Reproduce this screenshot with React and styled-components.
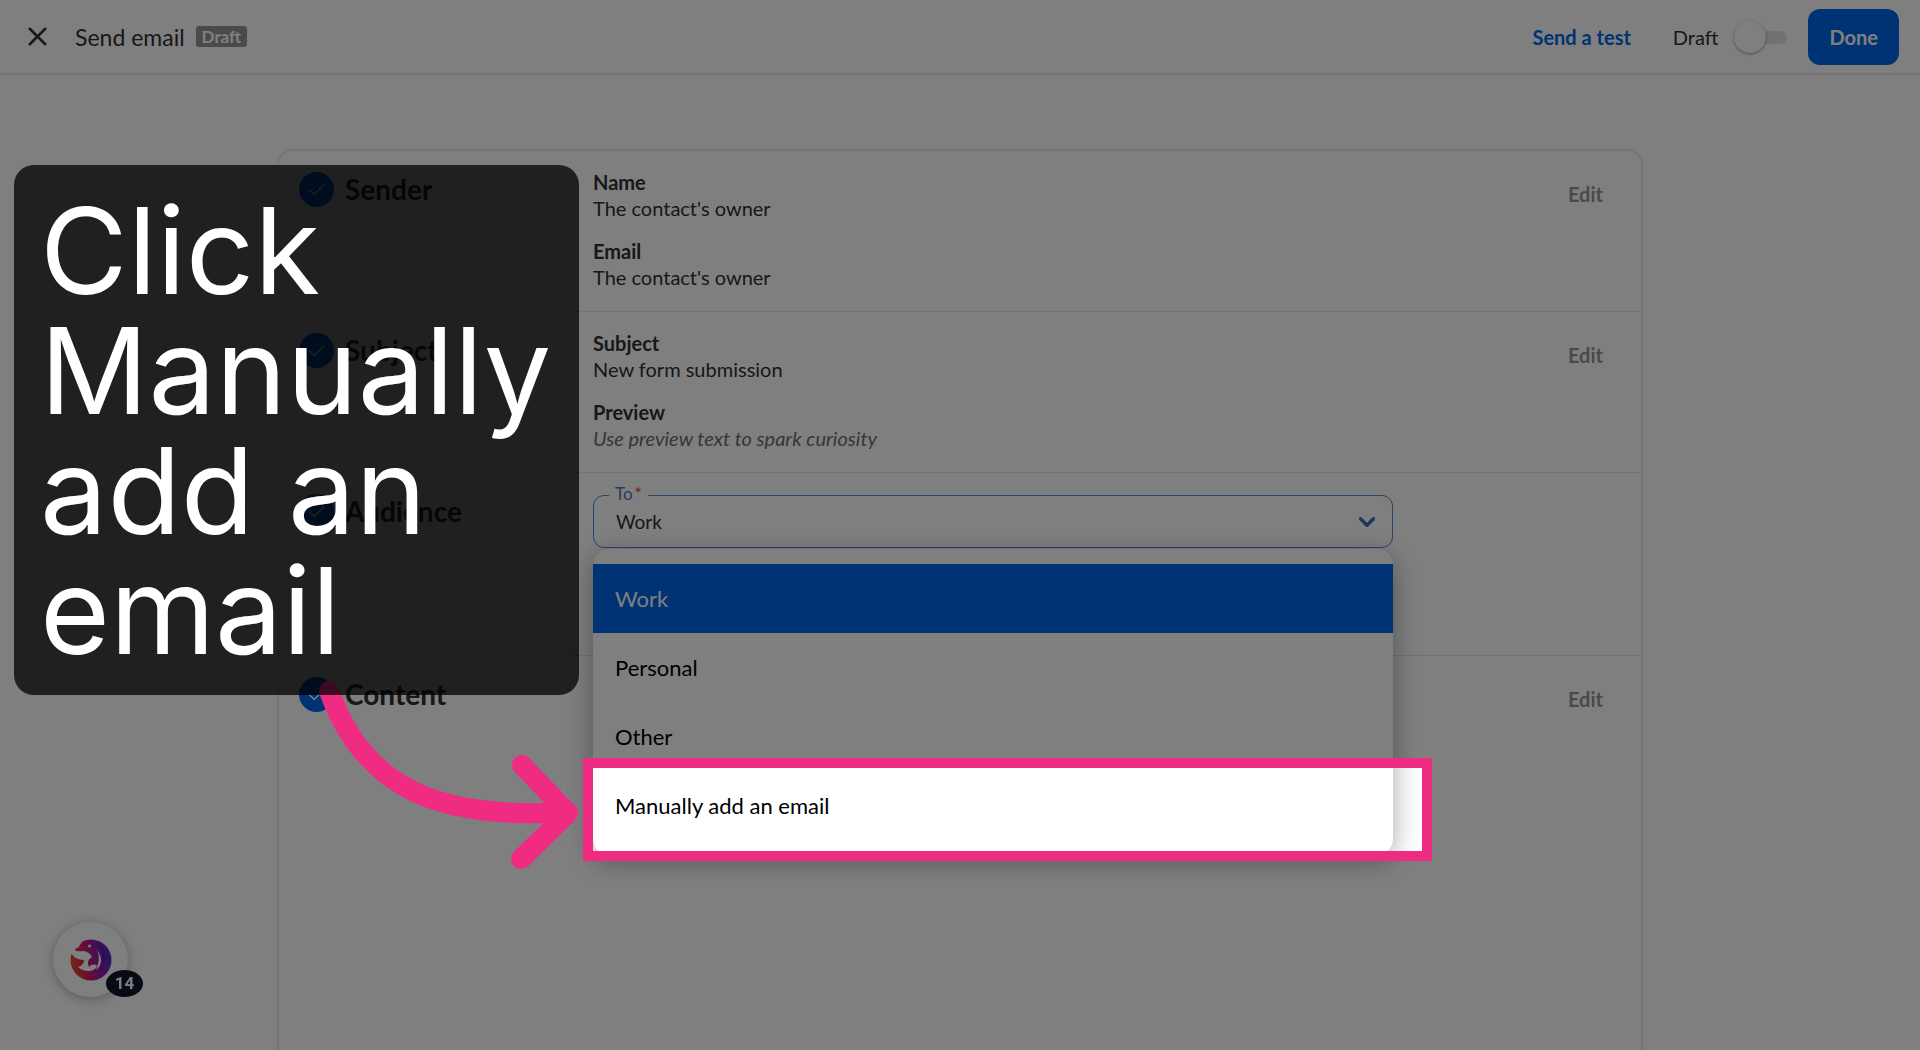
import { useState } from 'react'

import styled, { createGlobalStyle } from 'styled-components'
import { Check, ChevronDown, X } from 'lucide-react'

const GlobalStyle = createGlobalStyle`
  * {
    box-sizing: border-box;
  }

  body {
    margin: 0;
    background: #fff;
    color: #303030;
    font-family: Lato, "Liberation Sans", sans-serif;
    font-size: 20px;
    line-height: 26px;
  }

  button, select {
    font: inherit;
    color: inherit;
    border: 0;
    margin: 0;
    padding: 0;
    background: none;
  }
`

const Page = styled.div`
  position: relative;
  display: flex;
  flex-direction: column;
  min-height: 100vh;
  overflow: hidden;
`

const Header = styled.header`
  display: flex;
  align-items: center;
  justify-content: space-between;
  height: 75px;
  padding: 0 21px 0 22px;
  border-bottom: 2px solid #ebebeb;
`

const HeaderGroup = styled.div`
  display: flex;
  align-items: center;
`

const CloseButton = styled.button`
  display: flex;
  margin-right: 22px;
`

const Title = styled.h1`
  margin: 0 11px 0 0;
  font-size: 23px;
  font-weight: 400;
`

const Badge = styled.span`
  padding: 0 6px;
  border-radius: 3px;
  background: #949494;
  color: #fff;
  font-size: 17px;
  font-weight: 700;
  line-height: 21px;
`

const TestLink = styled.a`
  margin-right: 42px;
  color: #0067e9;
  font-weight: 700;
  text-decoration: none;
`

const SwitchLabel = styled.label`
  display: flex;
  align-items: center;
  gap: 16px;
  margin-right: 21px;
`

const Switch = styled.input`
  appearance: none;
  position: relative;
  width: 53px;
  height: 32px;
  margin: 0;

  &::before {
    content: '';
    position: absolute;
    top: 10px;
    left: 10px;
    right: 0;
    height: 13px;
    border-radius: 7px;
    background: #e4e4e4;
  }

  &::after {
    content: '';
    position: absolute;
    top: 0;
    left: 0;
    width: 32px;
    height: 32px;
    border-radius: 50%;
    background: #fff;
    box-shadow: 0 1px 3px rgba(0, 0, 0, 0.4);
  }
`

const DoneButton = styled.button`
  height: 56px;
  padding: 0 21px;
  border-radius: 12px;
  background: #0067e9;
  color: #fff;
  font-weight: 700;
`

const Card = styled.main`
  flex: 1;
  width: calc(100% - 48px);
  max-width: 1366px;
  margin: 74px auto 0;
  border: 2px solid #ebebeb;
  border-bottom: 0;
  border-radius: 16px 16px 0 0;
`

const Section = styled.section`
  display: grid;
  grid-template-columns: 294px minmax(0, 800px) 1fr;
  align-items: start;
  min-height: ${({ $tall }) => ($tall ? '183px' : '161px')};
  padding: 18px 38px 18px 20px;
  border-bottom: ${({ $last }) => ($last ? '0' : '1px solid #e4e4e4')};
`

const SectionTitle = styled.h2`
  display: flex;
  align-items: center;
  gap: 11px;
  margin: 3px 0 0;
  font-size: 28px;
  font-weight: 700;
  line-height: 35px;
`

const Tick = styled.span`
  display: flex;
  align-items: center;
  justify-content: center;
  width: 35px;
  height: 35px;
  border-radius: 50%;
  background: #0067e9;
  color: #fff;
`

const Fields = styled.dl`
  display: grid;
  gap: 17px;
  margin: 0;
`

const FieldName = styled.dt`
  font-weight: 700;
`

const FieldValue = styled.dd`
  margin: 0;
  color: ${({ $hint }) => ($hint ? '#6e6e6e' : 'inherit')};
  font-style: ${({ $hint }) => ($hint ? 'italic' : 'normal')};
`

const EditButton = styled.button`
  justify-self: end;
  margin-top: 12px;
  color: #949494;
  font-weight: 700;
`

const SelectWrap = styled.div`
  position: relative;
  margin-top: 4px;
`

const SelectLabel = styled.label`
  position: absolute;
  top: -14px;
  left: 16px;
  display: flex;
  gap: 2px;
  padding: 0 6px;
  background: #fff;
  color: #4f76b8;
  font-size: 17px;
`

const Required = styled.span`
  color: #e0301e;
`

const Select = styled.select`
  appearance: none;
  display: block;
  width: 100%;
  height: 53px;
  padding: 0 22px;
  border: 1px solid #4f8ad8;
  border-radius: 11px;
  font-size: 19px;
`

const SelectIcon = styled.span`
  position: absolute;
  top: 14px;
  right: 13px;
  display: flex;
  color: #3c69b4;
  pointer-events: none;
`

const Menu = styled.div`
  position: absolute;
  top: 54px;
  left: 0;
  right: 0;
  z-index: 10;
  padding: 15px 0;
  border-radius: 16px;
  background: #fff;
  box-shadow: 0 6px 28px rgba(0, 0, 0, 0.35);
`

const Option = styled.button`
  display: block;
  width: 100%;
  height: 69px;
  padding: 0 22px;
  background: ${({ $active }) => ($active ? '#0067e9' : 'transparent')};
  color: ${({ $active }) => ($active ? '#fff' : '#000')};
  font-size: 22px;
  text-align: left;
`

// The frame's outer shadow dims everything around it.
const Spotlight = styled.div`
  position: absolute;
  top: 263px;
  left: -10px;
  right: -39px;
  z-index: 20;
  height: 103px;
  border: 10px solid #f02c82;
  box-shadow: 0 0 0 3000px rgba(0, 0, 0, 0.5);
  pointer-events: none;
`

const Arrow = styled.svg`
  position: absolute;
  top: 670px;
  left: 310px;
  z-index: 21;
  pointer-events: none;
`

const Callout = styled.aside`
  position: absolute;
  top: 165px;
  left: 14px;
  z-index: 22;
  width: 565px;
  padding: 26px 26px 24px;
  border-radius: 20px;
  background: rgba(0, 0, 0, 0.75);
  color: #fff;
  font-family: Inter, "Liberation Sans", sans-serif;
  font-size: 120px;
  line-height: 120px;
`

const Launcher = styled.button`
  position: fixed;
  left: 53px;
  bottom: 53px;
  z-index: 5;
  display: flex;
  align-items: center;
  justify-content: center;
  width: 75px;
  height: 75px;
  border-radius: 50%;
  background: #fff;
  box-shadow: 0 2px 12px rgba(0, 0, 0, 0.3);
`

const Count = styled.span`
  position: absolute;
  right: -15px;
  bottom: 0;
  width: 37px;
  border-radius: 50%;
  background: #0c1628;
  color: #fff;
  font-family: Roboto, "Liberation Sans", sans-serif;
  font-size: 17px;
  font-weight: 700;
  line-height: 27px;
`

const sections = [
  {
    title: 'Sender',
    fields: [
      { name: 'Name', value: "The contact's owner" },
      { name: 'Email', value: "The contact's owner" },
    ],
  },
  {
    title: 'Subject',
    fields: [
      { name: 'Subject', value: 'New form submission' },
      { name: 'Preview', value: 'Use preview text to spark curiosity', hint: true },
    ],
  },
]

const emailTypes = ['Work', 'Personal', 'Other', 'Manually add an email']

function Heading({ children }) {
  return (
    <SectionTitle>
      <Tick><Check size={22} strokeWidth={1.5} /></Tick>
      {children}
    </SectionTitle>
  )
}

function DolphinLogo() {
  return (
    <svg width="42" height="42" viewBox="0 0 42 42" aria-hidden="true">
      <defs>
        <linearGradient id="body" x1="0" y1="0.6" x2="1" y2="0.4">
          <stop offset="0" stopColor="#e8501e" />
          <stop offset="0.4" stopColor="#cc1a6c" />
          <stop offset="0.65" stopColor="#941ea8" />
          <stop offset="1" stopColor="#4a28c8" />
        </linearGradient>
      </defs>
      <circle cx="21" cy="21" r="20.5" fill="url(#body)" />
      <path d="M29 4 C37 11 38 25 30 33 C34 22 34 13 25 5 Z" fill="#5c1690" opacity="0.6" />
      <path d="M-1 -1 H20 C14 0 10 4 9 8 C6 9 5 10 5 11 C6 13 11 12 14 12 C18 13 21 15 22 18 C18 20 17 24 19 28 C22 25 25 25 27 27 C25 33 14 34 8 28 C12 27 14 24 14 21 C8 21 3 18 0 13 L-1 14 Z" fill="#fff" />
      <path d="M27 11 C33 18 32 27 26 31 C29 24 30 17 27 11 Z" fill="#fff" />
      <circle cx="19.5" cy="7" r="1.5" fill="#fff" />
    </svg>
  )
}

function App() {
  const [type, setType] = useState('Work')

  return (
    <Page>
      <GlobalStyle />
      <Header>
        <HeaderGroup>
          <CloseButton aria-label="Close"><X size={31} strokeWidth={2} /></CloseButton>
          <Title>Send email</Title>
          <Badge>Draft</Badge>
        </HeaderGroup>
        <HeaderGroup>
          <TestLink href="#test">Send a test</TestLink>
          <SwitchLabel>
            Draft
            <Switch type="checkbox" role="switch" />
          </SwitchLabel>
          <DoneButton>Done</DoneButton>
        </HeaderGroup>
      </Header>

      <Card>
        {sections.map((section) => (
          <Section key={section.title}>
            <Heading>{section.title}</Heading>
            <Fields>
              {section.fields.map((field) => (
                <div key={field.name}>
                  <FieldName>{field.name}</FieldName>
                  <FieldValue $hint={field.hint}>{field.value}</FieldValue>
                </div>
              ))}
            </Fields>
            <EditButton>Edit</EditButton>
          </Section>
        ))}

        <Section $tall>
          <Heading>Audience</Heading>
          <SelectWrap>
            <Select id="to" value={type} onChange={(event) => setType(event.target.value)}>
              {emailTypes.map((item) => <option key={item}>{item}</option>)}
            </Select>
            <SelectLabel htmlFor="to">To<Required>*</Required></SelectLabel>
            <SelectIcon><ChevronDown size={26} strokeWidth={3} /></SelectIcon>
            <Menu role="listbox" aria-label="To">
              {emailTypes.map((item) => (
                <Option
                  key={item}
                  role="option"
                  aria-selected={item === type}
                  $active={item === type}
                  onClick={() => setType(item)}
                >
                  {item}
                </Option>
              ))}
            </Menu>
            <Spotlight />
          </SelectWrap>
        </Section>

        <Section $last>
          <Heading>Content</Heading>
          <div />
          <EditButton>Edit</EditButton>
        </Section>
      </Card>

      <Launcher aria-label="Open help, 14 new">
        <DolphinLogo />
        <Count>14</Count>
      </Launcher>

      <Arrow width="280" height="210" viewBox="310 670 280 210" fill="none" stroke="#f02c82" strokeWidth="20" strokeLinecap="round" strokeLinejoin="round">
        <path d="M329 691 C365 790 440 820 568 812" />
        <path d="M522 765 L568 813 L521 859" />
      </Arrow>
      <Callout>Click Manually add an email</Callout>
    </Page>
  )
}

export default App
